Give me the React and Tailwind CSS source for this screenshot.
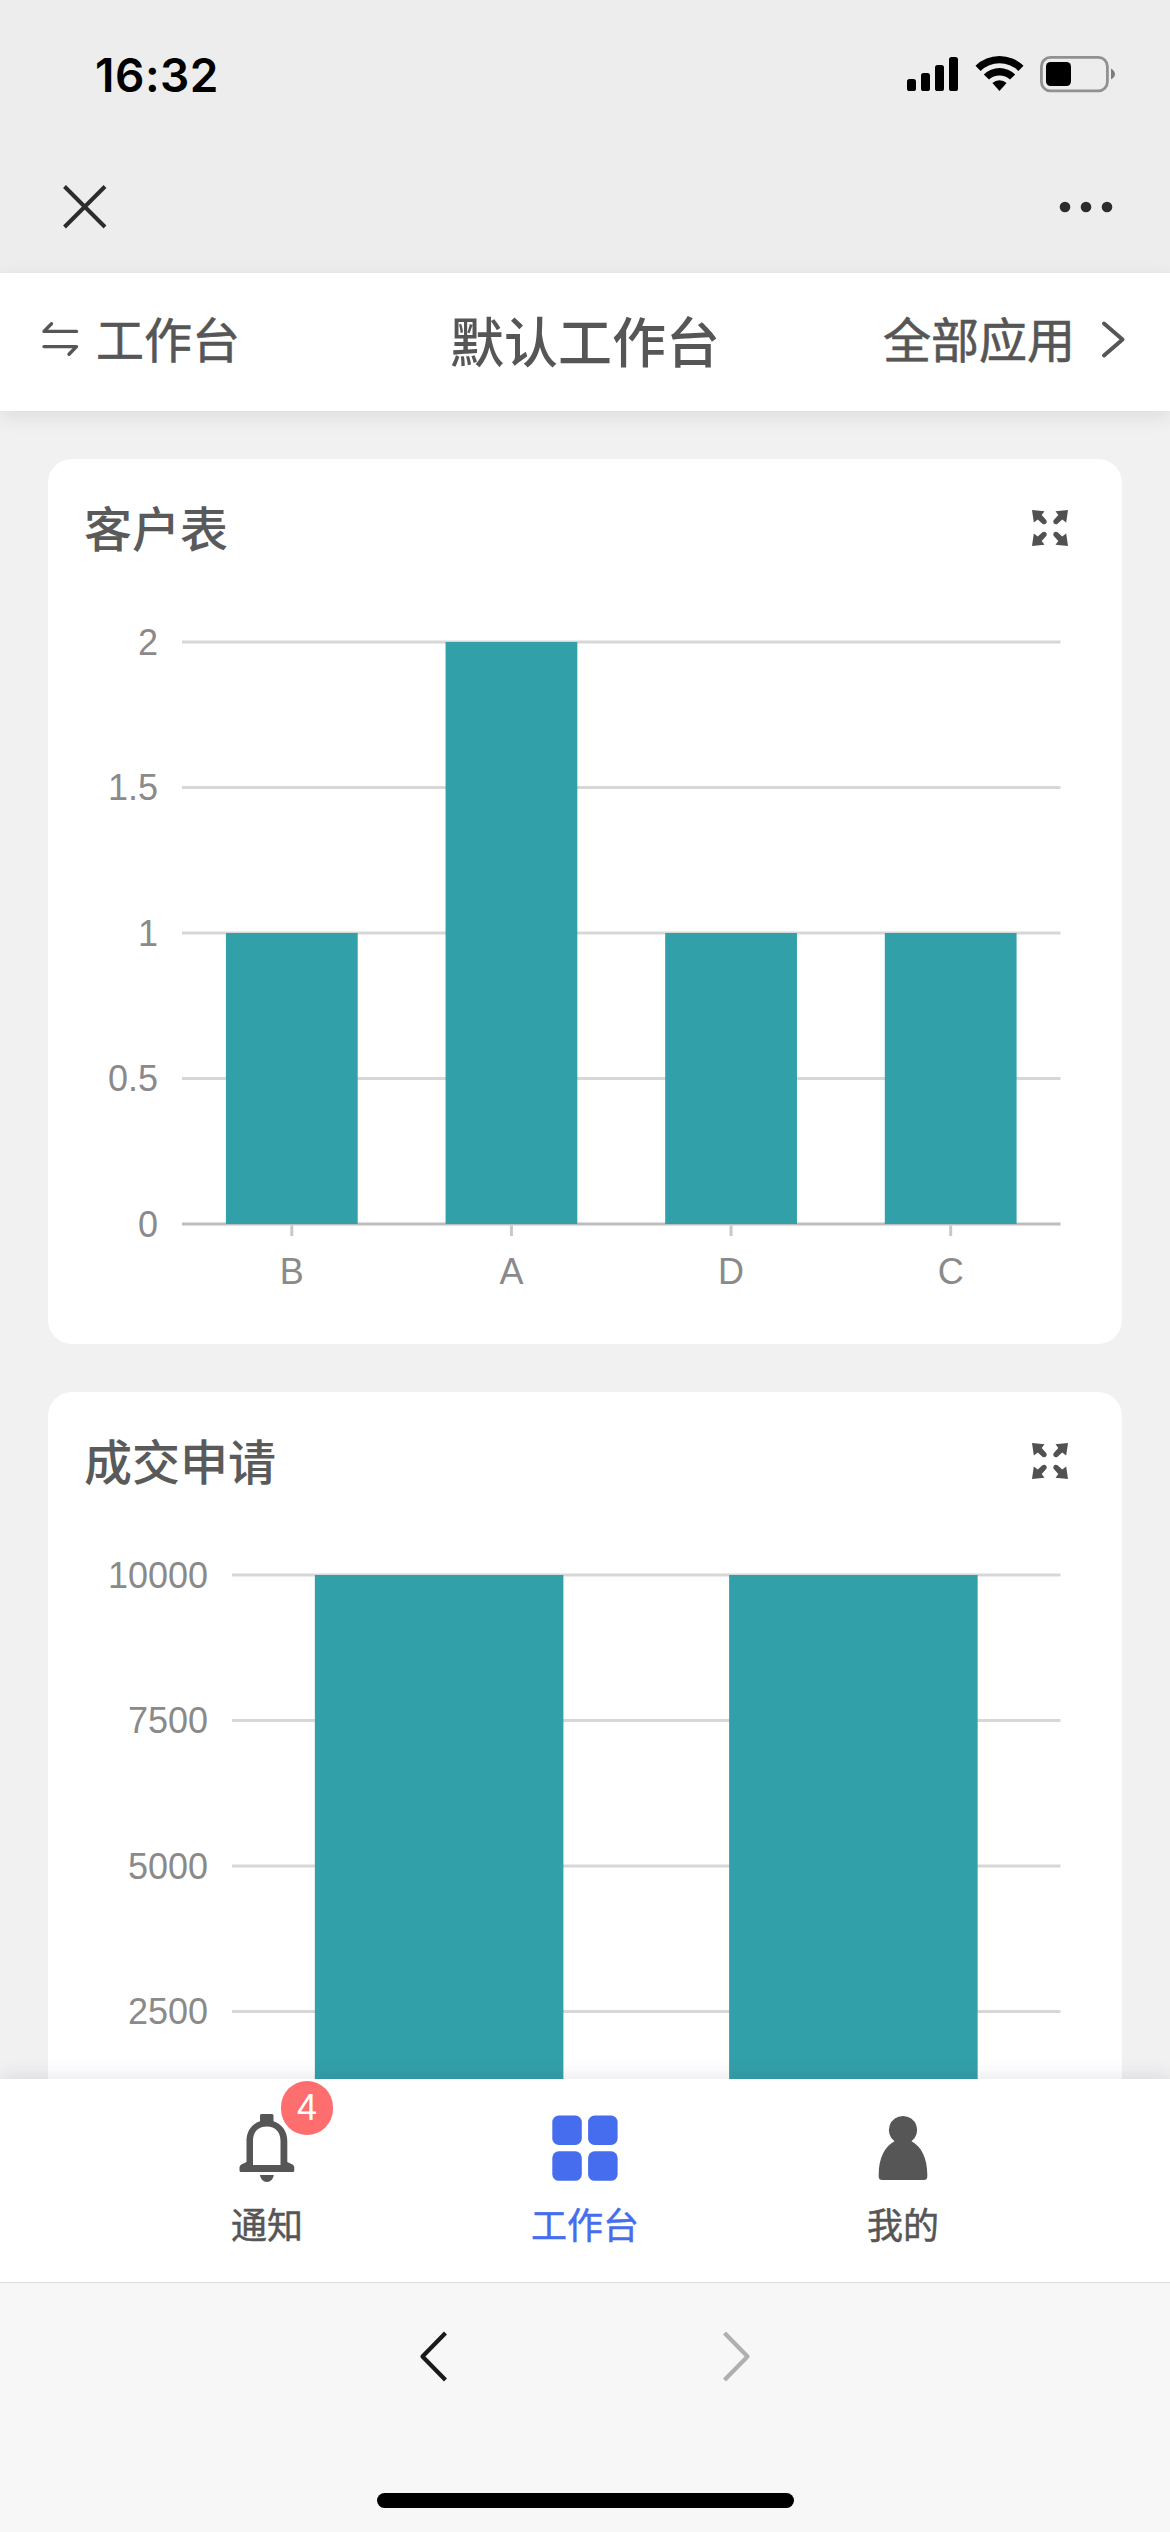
const CJK = "font-['Noto_Sans_CJK_SC',sans-serif]";

function StatusBar() {
  return (
    <div className="flex h-[148px] items-start justify-between pl-[95px] pr-[53px] pt-[50px]">
      <span className="font-['Inter',sans-serif] text-[46px] font-semibold leading-[50px] tracking-[0.5px] text-black">16:32</span>
      <div className="flex items-start pt-[5px]">
        <svg width="52" height="36" viewBox="0 0 52 36" className="mr-[16px]">
          <rect x="0" y="24" width="9" height="12" rx="2.6" />
          <rect x="14" y="18" width="9" height="18" rx="2.6" />
          <rect x="28" y="10" width="9" height="26" rx="2.6" />
          <rect x="42" y="2" width="9" height="34" rx="2.6" />
        </svg>
        <svg width="49" height="36" viewBox="0 0 49 36" className="mr-[16px]">
          <path d="M0.5 10.8 A34.5 34.5 0 0 1 48.5 10.8 L43.4 16 A27.2 27.2 0 0 0 5.6 16 Z" />
          <path d="M8.8 19.4 A22.6 22.6 0 0 1 40.2 19.4 L35 24.6 A15.2 15.2 0 0 0 14 24.6 Z" />
          <path d="M17.4 28 A10.5 10.5 0 0 1 31.6 28 L24.5 36 Z" />
        </svg>
        <svg width="77" height="38" viewBox="0 0 77 38">
          <rect x="1.4" y="2.4" width="66" height="33.4" rx="9" fill="none" stroke="#919191" strokeWidth="2.8" />
          <rect x="6" y="7" width="25" height="24" rx="4.5" />
          <path d="M71 13.4 Q75 16 75 19 Q75 22 71 24.6 Z" fill="#7d7d7d" />
        </svg>
      </div>
    </div>
  );
}

function BrowserBar() {
  return (
    <div className="flex h-[125px] items-start justify-between pl-[62px] pr-[57px] pt-[36px]">
      <svg width="46" height="46" viewBox="0 0 46 46" fill="none" stroke="#2c2c2c" strokeWidth="4">
        <path d="M2.5 2.5 L43 43 M43 2.5 L2.5 43" />
      </svg>
      <svg width="54" height="46" viewBox="0 0 54 46" fill="#2c2c2c">
        <circle cx="6" cy="23" r="5.3" />
        <circle cx="27" cy="23" r="5.3" />
        <circle cx="48" cy="23" r="5.3" />
      </svg>
    </div>
  );
}

function NavBar() {
  return (
    <header className="relative z-10 grid h-[138px] grid-cols-3 items-start bg-white px-[41px] pt-[31px] text-[48px] leading-[66px] text-[#565656] shadow-[0_6px_18px_rgba(50,50,100,0.10)]">
      <div className="flex items-center">
        <svg width="39" height="38" viewBox="0 0 39 38" className="mr-[16px] mt-[4px]" fill="none" stroke="#565656" strokeWidth="3.400" strokeLinecap="round" strokeLinejoin="round">
          <path d="M35.5 11.4 H3 L10.5 3.8" />
          <path d="M3 26.6 H35.5 L28 34.2" />
        </svg>
        <span className="[-webkit-text-stroke:0.6px_#565656]">工作台</span>
      </div>
      <h1 className="text-center text-[54px] font-medium leading-[72px]">默认工作台</h1>
      <div className="flex items-center justify-end">
        <span className="[-webkit-text-stroke:0.6px_#565656]">全部应用</span>
        <svg width="30" height="40" viewBox="0 0 30 40" className="-mr-px ml-[25px] mt-[4px]" fill="none" stroke="#565656" strokeWidth="4" strokeLinecap="round" strokeLinejoin="round">
          <path d="M4 4.500 L22.500 20.500 L4 36.500" />
        </svg>
      </div>
    </header>
  );
}

function ExpandIcon() {
  const arrow = "M0 0 L12.5 1.2 L9.7 5 L14.4 10.2 Q15.4 12 14 13.6 Q12.3 15 10.4 13.7 L5.8 9.6 L1.8 12.6 Z";
  return (
    <svg width="36" height="36" viewBox="0 0 36 36" fill="#515151">
      <path d={arrow} />
      <path d={arrow} transform="translate(36 0) scale(-1 1)" />
      <path d={arrow} transform="translate(0 36) scale(1 -1)" />
      <path d={arrow} transform="translate(36 36) scale(-1 -1)" />
    </svg>
  );
}

const TOP = 43;
const STEP = 145.5;
const RIGHT = 1012.5;

function BarChart({ left, ticks, max, data, ratio = 0.6 }) {
  const base = TOP + STEP * 4;
  const band = (RIGHT - left) / data.length;
  const barWidth = band * ratio;
  return (
    <svg width="1074" height="745" viewBox="0 0 1074 745" className="block font-['Liberation_Sans',sans-serif]" fontSize="36" fill="#8a8a8a">
      {ticks.map((label, i) => (
        <g key={label}>
          {i < 4 && <rect x={left} y={TOP + STEP * i - 1.5} width={RIGHT - left} height="3" fill="#d7d7d7" />}
          <text x={left - 24} y={TOP + STEP * i + 12.5} textAnchor="end">{label}</text>
        </g>
      ))}
      <rect x={left} y={base - 1.5} width={RIGHT - left} height="3" fill="#bdbdbd" />
      {data.map((d, i) => {
        const center = left + band * (i + 0.5);
        const height = (d.value / max) * STEP * 4;
        return (
          <g key={i}>
            <rect x={center - barWidth / 2} y={base - height} width={barWidth} height={height} fill="#32a0a9" />
            <rect x={center - 1.5} y={base + 1.5} width="3" height="10.5" fill="#c8c8c8" />
            {d.name && <text x={center} y={base + 60} textAnchor="middle">{d.name}</text>}
          </g>
        );
      })}
    </svg>
  );
}

function ChartCard({ title, children }) {
  return (
    <section className="h-[885px] shrink-0 overflow-hidden rounded-[24px] bg-white">
      <div className="flex h-[140px] items-start justify-between pl-[36px] pr-[54px] pt-[31px]">
        <h2 className="text-[48px] font-medium leading-[72px] text-[#5a5a5a]">{title}</h2>
        <div className="pt-[20px]">
          <ExpandIcon />
        </div>
      </div>
      {children}
    </section>
  );
}

function BellIcon() {
  return (
    <svg width="56" height="70" viewBox="0 0 56 70" fill="#565656">
      <path fillRule="evenodd" d="M21 2.5 Q21 1 22.5 1 H33 Q34.500 1 34.500 2.500 V8.300 C43 11 48.300 18.500 48.300 28 V49 L53.500 51.500 Q55.300 52.500 55.300 54.500 V57.500 Q55.300 59 53.800 59 H2 Q0.500 59 0.500 57.500 V54.500 Q0.500 52.500 2.300 51.500 L7.500 49 V28 C7.500 18.500 12.500 11 21 8.300 Z M14 52 H41.500 V28 C41.500 19 36.500 13.500 27.800 13.500 C19 13.500 14 19 14 28 Z" />
      <path d="M21 62 H34.800 C34.200 66 31.500 69 27.900 69 C24.300 69 21.600 66 21 62 Z" />
    </svg>
  );
}

function GridIcon() {
  return (
    <svg width="66" height="70" viewBox="0 0 66 70" fill="#466ded">
      <rect x="0.300" y="2.500" width="29.500" height="29.500" rx="6.500" />
      <rect x="36.100" y="2.500" width="29.500" height="29.500" rx="6.500" />
      <rect x="0.300" y="38.300" width="29.500" height="29.500" rx="6.500" />
      <rect x="36.100" y="38.300" width="29.500" height="29.500" rx="6.500" />
    </svg>
  );
}

function PersonIcon() {
  return (
    <svg width="50" height="70" viewBox="0 0 50 70" fill="#565656">
      <path d="M25 3 A14 14 0 0 1 33.500 28.200 C43 33 49.300 45 49.300 61.500 V63.500 Q49.300 67 45.800 67 H4.200 Q0.700 67 0.700 63.500 V61.500 C0.700 45 7 33 16.500 28.200 A14 14 0 0 1 25 3 Z" />
    </svg>
  );
}

function Tab({ icon, label, active, badge }) {
  return (
    <div className={active ? "flex flex-1 flex-col items-center pt-[34px] text-[#466ded]" : "flex flex-1 flex-col items-center pt-[34px] text-[#565656]"}>
      <div className="relative">
        {icon}
        {badge && (
          <span className="absolute left-[42px] top-[-32px] flex h-[54px] w-[52px] items-center justify-center rounded-full bg-[#ff6e6e] font-['Liberation_Sans',sans-serif] text-[36px] leading-none text-white">
            {badge}
          </span>
        )}
      </div>
      <span className="mt-[13px] text-[36px] leading-[54px] [-webkit-text-stroke:0.5px_currentColor]">{label}</span>
    </div>
  );
}

export default function App() {
  return (
    <div className={`${CJK} flex h-[2532px] w-[1170px] flex-col overflow-hidden bg-[#f1f1f1]`}>
      <div className="h-[273px] shrink-0 bg-[#ededed]">
        <StatusBar />
        <BrowserBar />
      </div>
      <NavBar />
      <main className="flex h-[1668px] shrink-0 flex-col gap-[48px] overflow-hidden px-[48px] pt-[48px]">
        <ChartCard title="客户表">
          <BarChart
            left={134}
            max={2}
            ticks={["2", "1.5", "1", "0.5", "0"]}
            data={[
              { name: "B", value: 1 },
              { name: "A", value: 2 },
              { name: "D", value: 1 },
              { name: "C", value: 1 },
            ]}
          />
        </ChartCard>
        <ChartCard title="成交申请">
          <BarChart
            left={184}
            max={10000}
            ticks={["10000", "7500", "5000", "2500"]}
            data={[{ value: 10000 }, { value: 10000 }]}
          />
        </ChartCard>
      </main>
      <nav className="relative z-10 flex h-[203px] shrink-0 bg-white px-[108px] shadow-[0_-4px_16px_rgba(50,50,100,0.10)]">
        <Tab icon={<BellIcon />} label="通知" badge="4" />
        <Tab icon={<GridIcon />} label="工作台" active />
        <Tab icon={<PersonIcon />} label="我的" />
      </nav>
      <footer className="relative z-20 flex h-[250px] shrink-0 flex-col items-center justify-between border-t border-[#dcdcdc] bg-[#f7f7f7] pb-[24px] pt-[47px]">
        <div className="flex w-[332px] justify-between">
          <svg width="30" height="54" viewBox="0 0 30 54" fill="none" stroke="#1a1a1a" strokeWidth="4.200" strokeLinejoin="round">
            <path d="M26.500 3 L3.500 26.500 L26.500 50" />
          </svg>
          <svg width="30" height="54" viewBox="0 0 30 54" fill="none" stroke="#b0b0b0" strokeWidth="4.200" strokeLinejoin="round">
            <path d="M3.500 3 L26.500 26.500 L3.500 50" />
          </svg>
        </div>
        <div className="h-[15px] w-[417px] rounded-full bg-black" />
      </footer>
    </div>
  );
}
